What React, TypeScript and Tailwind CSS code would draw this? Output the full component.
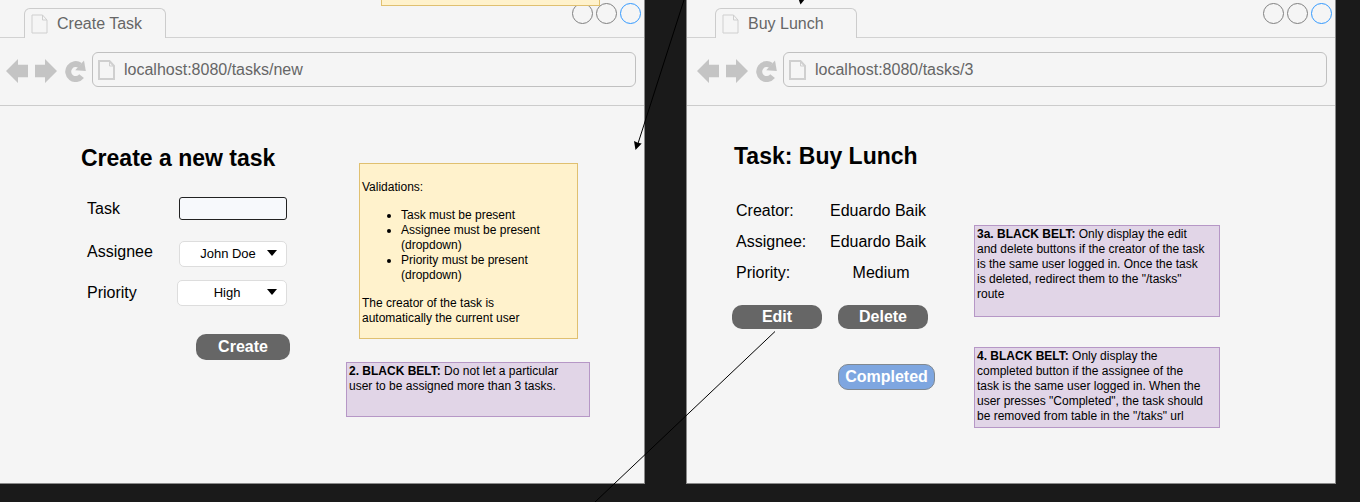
import React, { useId } from "react";

type Children = { children: React.ReactNode };

function PageIcon({ className, stroke }: { className: string; stroke: number }) {
  return (
    <svg viewBox="0 0 17 20" className={className} fill="none" stroke="#cfcfcf" strokeWidth={stroke} aria-hidden="true">
      <path d="M1 1h10.500L16 6v13H1z" />
      <path d="M11.500 1v5H16" strokeWidth={1} />
    </svg>
  );
}

function BackArrow() {
  return (
    <svg viewBox="0 0 22 24" className="h-6 w-[22px]" fill="#c4c4c4" aria-hidden="true">
      <path d="M0 12 12 0v5.800H22v12.400H12V24z" />
    </svg>
  );
}

function ForwardArrow() {
  return (
    <svg viewBox="0 0 22 24" className="h-6 w-[22px]" fill="#c4c4c4" aria-hidden="true">
      <path d="M22 12 10 0v5.800H0v12.400h10V24z" />
    </svg>
  );
}

function ReloadIcon() {
  return (
    <svg viewBox="0 0 21 22" className="h-[22px] w-[21px]" aria-hidden="true">
      <path d="M16.600 16.200A7.500 7.500 0 1 1 15 5.400" fill="none" stroke="#c4c4c4" strokeWidth="6" />
      <path d="M19 .5 20.800 11 10.200 10.300z" fill="#c4c4c4" />
    </svg>
  );
}

function BrowserWindow({ title, url, className, children }: { title: string; url: string; className?: string } & Children) {
  const urlId = useId();
  return (
    <section className={`flex min-w-0 flex-1 flex-col border border-t-0 border-[#8a8a8a] bg-[#f5f5f5] pb-[55px] ${className ?? ""}`}>
      <header className="flex h-[38px] items-end">
        <div className="w-7 border-b border-[#d2d2d2]" />
        <div className="flex h-[30px] w-[142px] items-center gap-[9px] rounded-t-md border border-b-0 border-[#cccccc] pl-1.5">
          <PageIcon className="h-5 w-[17px]" stroke={1} />
          <h1 className="text-base text-[#666666]">{title}</h1>
        </div>
        <div className="flex flex-1 justify-end gap-[3px] self-stretch border-b border-[#d2d2d2] pt-[3px] pr-[3px]">
          <span className="size-[21px] rounded-full border border-[#808080]" />
          <span className="size-[21px] rounded-full border border-[#808080]" />
          <span className="size-[21px] rounded-full border border-[#3399ff]" />
        </div>
      </header>
      <nav className="flex items-center border-b border-[#cccccc] pt-3.5 pr-2 pb-[18px] pl-2.5">
        <div className="flex items-center pt-0.5">
          <button type="button" aria-label="Back">
            <BackArrow />
          </button>
          <button type="button" aria-label="Forward" className="ml-[7px]">
            <ForwardArrow />
          </button>
          <button type="button" aria-label="Reload" className="ml-2">
            <ReloadIcon />
          </button>
        </div>
        <div className="ml-1.5 flex h-[35px] flex-1 items-center gap-[9px] rounded-md border border-[#c0c0c0] pl-[5px]">
          <label htmlFor={urlId} aria-label="Address">
            <PageIcon className="h-5 w-[17px]" stroke={2} />
          </label>
          <input id={urlId} readOnly value={url} className="min-w-0 flex-1 bg-transparent text-base text-[#666666] outline-none" />
        </div>
      </nav>
      {children}
    </section>
  );
}

function Dropdown({ id, value, className }: { id: string; value: string; className: string }) {
  return (
    <div className={`relative h-[26px] ${className}`}>
      <select
        id={id}
        defaultValue={value}
        className="h-full w-full appearance-none rounded-[5px] border border-[#dddddd] bg-white pr-2.5 text-center text-[13px] text-black"
      >
        <option>{value}</option>
      </select>
      <svg viewBox="0 0 10 6" className="pointer-events-none absolute top-[9px] right-[10px] h-1.5 w-2.5" aria-hidden="true">
        <path d="M0 0h10L5 6z" />
      </svg>
    </div>
  );
}

function PurpleNote({ className, children }: { className: string } & Children) {
  return (
    <p className={`border border-[#b697c6] bg-[#e1d5e7] px-0.5 py-px text-xs leading-[15px] ${className}`}>{children}</p>
  );
}

const darkButton = "rounded-[10px] bg-[#666666] text-base leading-6 font-bold text-white";

function CreateTask() {
  return (
    <main className="flex pl-[85px]">
      <div className="w-[265px] shrink-0 pt-[37px]">
        <h2 className="text-[23px] leading-[30px] font-bold">Create a new task</h2>
        <form className="mt-6 flex flex-col pl-1.5" onSubmit={(e) => e.preventDefault()}>
          <div className="flex w-[200px] items-center justify-between">
            <label htmlFor="task" className="leading-[22px]">Task</label>
            <input id="task" className="h-[23px] w-[108px] rounded-[3px] border border-[#222222] bg-[#f7f9fc] px-1 text-[13px]" />
          </div>
          <div className="mt-[21px] flex w-[200px] items-start justify-between">
            <label htmlFor="assignee" className="leading-[22px]">Assignee</label>
            <Dropdown id="assignee" value="John Doe" className="w-[108px]" />
          </div>
          <div className="mt-[13px] flex w-[200px] items-center justify-between">
            <label htmlFor="priority" className="leading-[22px]">Priority</label>
            <Dropdown id="priority" value="High" className="w-[110px]" />
          </div>
          <button type="submit" className={`mt-7 ml-[109px] h-[26px] w-[94px] ${darkButton}`}>
            Create
          </button>
        </form>
      </div>
      <aside className="pt-[57px]">
        <div className="ml-[13px] w-[219px] border border-[#e0c070] bg-[#fff2cc] px-0.5 pt-4 pb-3 text-xs leading-[15px]">
          <p>Validations:</p>
          <ul className="my-[13px] list-disc pl-[39px]">
            <li>Task must be present</li>
            <li>Assignee must be present (dropdown)</li>
            <li>Priority must be present (dropdown)</li>
          </ul>
          <p>
            The creator of the task is
            <br />
            automatically the current user
          </p>
        </div>
        <PurpleNote className="mt-[23px] h-[55px] w-[244px]">
          <b>2. BLACK BELT:</b> Do not let a particular
          <br />
          user to be assigned more than 3 tasks.
        </PurpleNote>
      </aside>
    </main>
  );
}

function TaskDetails() {
  return (
    <main className="flex pl-[45px]">
      <div className="w-[242px] shrink-0 pt-[35px]">
        <h2 className="pl-0.5 text-[23px] leading-[30px] font-bold">Task: Buy Lunch</h2>
        <dl className="mt-6 grid grid-cols-[94px_102px] pl-1 leading-[31px]">
          <dt>Creator:</dt>
          <dd>Eduardo Baik</dd>
          <dt>Assignee:</dt>
          <dd>Eduardo Baik</dd>
          <dt>Priority:</dt>
          <dd className="text-center">Medium</dd>
        </dl>
        <div className="mt-[17px] flex gap-4">
          <button type="button" className={`w-[90px] ${darkButton}`}>Edit</button>
          <button type="button" className={`w-[90px] ${darkButton}`}>Delete</button>
        </div>
        <button
          type="button"
          className="mt-[35px] ml-[106px] w-[97px] rounded-[10px] border border-[#808890] bg-[#7ea6e0] text-base leading-6 font-bold text-white"
        >
          Completed
        </button>
      </div>
      <aside className="pt-[119px]">
        <PurpleNote className="h-[92px] w-[246px]">
          <b>3a. BLACK BELT:</b> Only display the edit
          <br />
          and delete buttons if the creator of the task
          <br />
          is the same user logged in. Once the task
          <br />
          is deleted, redirect them to the "/tasks"
          <br />
          route
        </PurpleNote>
        <PurpleNote className="mt-[30px] h-[81px] w-[246px]">
          <b>4. BLACK BELT:</b> Only display the
          <br />
          completed button if the assignee of the
          <br />
          task is the same user logged in. When the
          <br />
          user presses "Completed", the task should
          <br />
          be removed from table in the "/taks" url
        </PurpleNote>
      </aside>
    </main>
  );
}

function Connectors() {
  return (
    <svg className="pointer-events-none absolute top-0 left-0 h-[502px] w-[1360px]" viewBox="0 0 1360 502" aria-hidden="true">
      <g stroke="#000" strokeWidth="1">
        <path d="M684 0 637.500 145" />
        <path d="M775 331.500 595 502" />
      </g>
      <path d="M635.500 150 634 141l3.800 1.800 3.900.7z" />
      <path d="M800.500 4.500 798.500-1H805z" />
    </svg>
  );
}

export default function App() {
  return (
    <div className="relative min-h-screen overflow-hidden bg-[#1a1a1a] font-['Liberation_Sans',Arial,sans-serif] text-base text-black">
      <div className="flex gap-[41px] pr-6">
        <BrowserWindow title="Create Task" url="localhost:8080/tasks/new" className="-ml-[5px]">
          <CreateTask />
        </BrowserWindow>
        <BrowserWindow title="Buy Lunch" url="localhost:8080/tasks/3">
          <TaskDetails />
        </BrowserWindow>
      </div>
      <div className="absolute top-0 left-[381px] h-[6px] w-[219px] border border-t-0 border-[#e0c070] bg-[#fff2cc]" />
      <Connectors />
    </div>
  );
}
